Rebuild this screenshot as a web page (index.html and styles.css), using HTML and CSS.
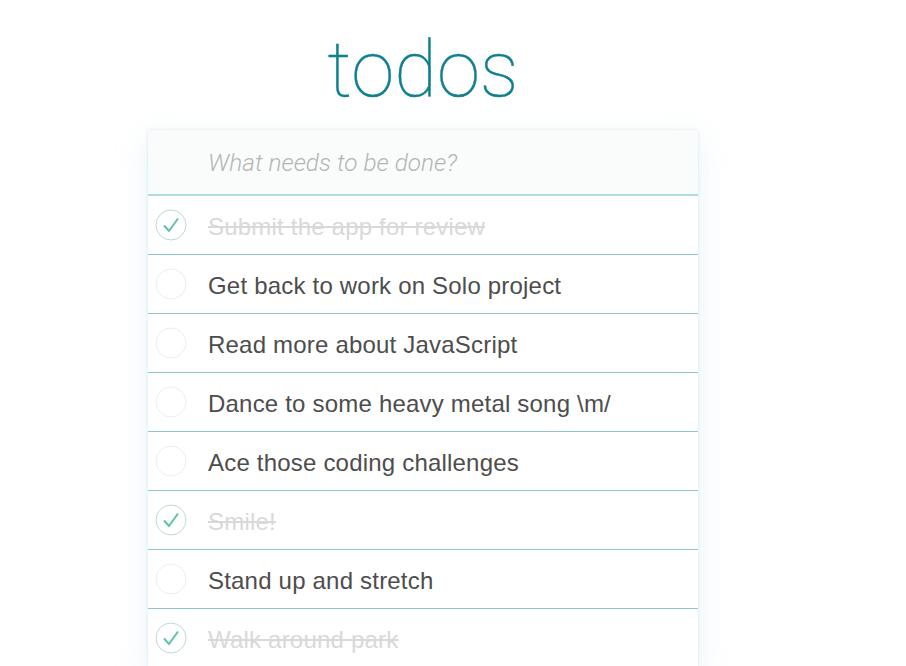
FILE: index.html
```html
<!DOCTYPE html>
<html>
<head>
<meta charset="utf-8">
<link rel="stylesheet" href="styles.css">
</head>
<body>
<section class="todoapp">
  <h1 class="title">todos</h1>
  <div class="panel">
    <div class="new-todo">What needs to be done?</div>
    <ul class="list">
      <li class="item done"><span class="toggle"><svg viewBox="0 0 32 32" width="32" height="32"><circle cx="16" cy="16" r="15" fill="none" stroke="#bddad5" stroke-width="1"/><path d="M9 16.5 L14 22 L23 9.5" fill="none" stroke="#5dc2af" stroke-width="2"/></svg></span><span class="label">Submit the app for review</span></li>
      <li class="item"><span class="toggle"><svg viewBox="0 0 32 32" width="32" height="32"><circle cx="16" cy="16" r="15" fill="none" stroke="#ededed" stroke-width="1"/></svg></span><span class="label">Get back to work on Solo project</span></li>
      <li class="item"><span class="toggle"><svg viewBox="0 0 32 32" width="32" height="32"><circle cx="16" cy="16" r="15" fill="none" stroke="#ededed" stroke-width="1"/></svg></span><span class="label">Read more about JavaScript</span></li>
      <li class="item"><span class="toggle"><svg viewBox="0 0 32 32" width="32" height="32"><circle cx="16" cy="16" r="15" fill="none" stroke="#ededed" stroke-width="1"/></svg></span><span class="label">Dance to some heavy metal song \m/</span></li>
      <li class="item"><span class="toggle"><svg viewBox="0 0 32 32" width="32" height="32"><circle cx="16" cy="16" r="15" fill="none" stroke="#ededed" stroke-width="1"/></svg></span><span class="label">Ace those coding challenges</span></li>
      <li class="item done"><span class="toggle"><svg viewBox="0 0 32 32" width="32" height="32"><circle cx="16" cy="16" r="15" fill="none" stroke="#bddad5" stroke-width="1"/><path d="M9 16.5 L14 22 L23 9.5" fill="none" stroke="#5dc2af" stroke-width="2"/></svg></span><span class="label">Smile!</span></li>
      <li class="item"><span class="toggle"><svg viewBox="0 0 32 32" width="32" height="32"><circle cx="16" cy="16" r="15" fill="none" stroke="#ededed" stroke-width="1"/></svg></span><span class="label">Stand up and stretch</span></li>
      <li class="item done"><span class="toggle"><svg viewBox="0 0 32 32" width="32" height="32"><circle cx="16" cy="16" r="15" fill="none" stroke="#bddad5" stroke-width="1"/><path d="M9 16.5 L14 22 L23 9.5" fill="none" stroke="#5dc2af" stroke-width="2"/></svg></span><span class="label">Walk around park</span></li>
    </ul>
  </div>
</section>
</body>
</html>
```
FILE: styles.css
```css
html, body {
  margin: 0;
  padding: 0;
  background: #ffffff;
  overflow: hidden;
}
body {
  font-family: "Liberation Sans", Arial, sans-serif;
  color: #4d4d4d;
}
.todoapp {
  width: 550px;
  margin-left: 148px;
  display: flex;
  flex-direction: column;
}
.title {
  margin: 0;
  height: 130px;
  box-sizing: border-box;
  padding-top: 20px;
  text-align: center;
  font-family: "Roboto", sans-serif;
  font-weight: 100;
  font-size: 78px;
  line-height: 100px;
  color: #0f7f8f;
  -webkit-text-stroke: 0.4px #0f7f8f;
}
.panel {
  background: #ffffff;
  box-shadow: 0 0 3px rgba(150, 200, 215, 0.35), 0 10px 30px rgba(170, 215, 235, 0.25);
}
.new-todo {
  height: 66px;
  box-sizing: border-box;
  padding-left: 60px;
  padding-top: 1px;
  display: flex;
  align-items: center;
  background: #fafcfc;
  border-bottom: 2px solid #b1dbe2;
  font-family: "Roboto", sans-serif;
  font-style: italic;
  font-weight: 300;
  font-size: 24.4px;
  color: #b4b4b4;
}
.list {
  list-style: none;
  margin: 0;
  padding: 0;
}
.item {
  height: 59px;
  box-sizing: border-box;
  border-bottom: 1px solid #90c6ca;
  display: flex;
  align-items: center;
}
.toggle {
  width: 32px;
  height: 32px;
  margin-left: 7px;
  margin-right: 21px;
  display: flex;
}
.label {
  font-size: 24px;
  letter-spacing: 0.2px;
  color: #4d4d4d;
  padding-top: 3px;
}
.done .label {
  color: #d9d9d9;
  text-decoration: line-through;
}
```
